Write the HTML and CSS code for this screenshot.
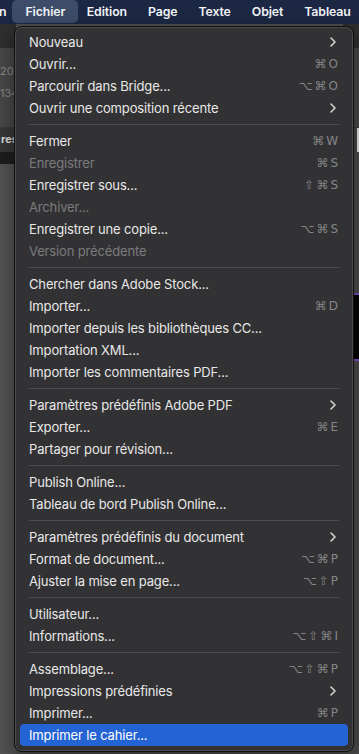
FILE: index.html
```html
<!DOCTYPE html>
<html lang="fr">
<head>
  <meta charset="UTF-8">
  <meta name="viewport" content="width=device-width, initial-scale=1.0">
  <title>Fichier</title>
  <link rel="stylesheet" href="styles.css">
</head>
<body>
  <!-- Menu bar -->
  <div class="menubar">
    <span class="menubar-item first">n</span>
    <span class="menubar-item active">Fichier</span>
    <span class="menubar-item">Edition</span>
    <span class="menubar-item">Page</span>
    <span class="menubar-item">Texte</span>
    <span class="menubar-item">Objet</span>
    <span class="menubar-item">Tableau</span>
  </div>

  <!-- App workspace behind the menu -->
  <div class="workspace">
    <div class="ws-left">
      <div class="ws-bar"></div>
      <div class="ws-fields">
        <span>200</span>
        <span>134</span>
      </div>
      <div class="ws-tab">res</div>
      <div class="ws-ruler"></div>
      <div class="ws-canvas"></div>
    </div>
    <div class="ws-right">
      <div class="ws-bar"></div>
      <div class="ws-fields"></div>
      <div class="ws-tab"></div>
      <div class="ws-canvas">
        <div class="ws-frame"></div>
      </div>
    </div>
  </div>

  <!-- Fichier dropdown -->
  <div class="menu">
    <div class="item">Nouveau<span class="sub"><svg width="6" height="10" viewBox="0 0 6 10"><path d="M1 1l4 4-4 4" /></svg></span></div>
    <div class="item">Ouvrir...<span class="key">⌘O</span></div>
    <div class="item">Parcourir dans Bridge...<span class="key">⌥⌘O</span></div>
    <div class="item">Ouvrir une composition récente<span class="sub"><svg width="6" height="10" viewBox="0 0 6 10"><path d="M1 1l4 4-4 4" /></svg></span></div>
    <div class="sep"></div>
    <div class="item">Fermer<span class="key">⌘W</span></div>
    <div class="item disabled">Enregistrer<span class="key">⌘S</span></div>
    <div class="item">Enregistrer sous...<span class="key">⇧⌘S</span></div>
    <div class="item disabled">Archiver...</div>
    <div class="item">Enregistrer une copie...<span class="key">⌥⌘S</span></div>
    <div class="item disabled">Version précédente</div>
    <div class="sep"></div>
    <div class="item">Chercher dans Adobe Stock...</div>
    <div class="item">Importer...<span class="key">⌘D</span></div>
    <div class="item">Importer depuis les bibliothèques CC...</div>
    <div class="item">Importation XML...</div>
    <div class="item">Importer les commentaires PDF...</div>
    <div class="sep"></div>
    <div class="item">Paramètres prédéfinis Adobe PDF<span class="sub"><svg width="6" height="10" viewBox="0 0 6 10"><path d="M1 1l4 4-4 4" /></svg></span></div>
    <div class="item">Exporter...<span class="key">⌘E</span></div>
    <div class="item">Partager pour révision...</div>
    <div class="sep"></div>
    <div class="item">Publish Online...</div>
    <div class="item">Tableau de bord Publish Online...</div>
    <div class="sep"></div>
    <div class="item">Paramètres prédéfinis du document<span class="sub"><svg width="6" height="10" viewBox="0 0 6 10"><path d="M1 1l4 4-4 4" /></svg></span></div>
    <div class="item">Format de document...<span class="key">⌥⌘P</span></div>
    <div class="item">Ajuster la mise en page...<span class="key">⌥⇧P</span></div>
    <div class="sep"></div>
    <div class="item">Utilisateur...</div>
    <div class="item">Informations...<span class="key">⌥⇧⌘I</span></div>
    <div class="sep"></div>
    <div class="item">Assemblage...<span class="key">⌥⇧⌘P</span></div>
    <div class="item">Impressions prédéfinies<span class="sub"><svg width="6" height="10" viewBox="0 0 6 10"><path d="M1 1l4 4-4 4" /></svg></span></div>
    <div class="item">Imprimer...<span class="key">⌘P</span></div>
    <div class="item selected">Imprimer le cahier...</div>
  </div>
</body>
</html>
```

FILE: styles.css
```css
* {
  margin: 0;
  padding: 0;
  box-sizing: border-box;
}

body {
  font-family: 'Inter', 'Noto Sans', sans-serif;
  background: #4f4f4f;
  color: #e6e6e6;
  height: 100vh;
  overflow: hidden;
  position: relative;
}

/* Top menu bar */
.menubar {
  height: 24px;
  background: #1c2843;
  display: flex;
  align-items: center;
  font-size: 12.3px;
  font-weight: 600;
  color: #f2f4f8;
  letter-spacing: -0.1px;
  white-space: nowrap;
  overflow: hidden;
}

.menubar-item {
  padding: 0 10.5px;
  line-height: 23px;
  align-self: flex-start;
}

.menubar-item.first {
  padding: 0 6px 0 0;
  margin-left: -1px;
}

.menubar-item.active {
  background: #3d4c69;
  border-radius: 5px;
  padding: 0 13px 0 13px;
  margin-right: -2px;
}

/* Workspace that peeks out around the menu */
.workspace {
  display: flex;
  justify-content: space-between;
  height: calc(100vh - 24px);
}

.ws-left,
.ws-right {
  width: 16px;
  display: flex;
  flex-direction: column;
}

.ws-bar {
  height: 24px;
  background: #2f2f2f;
}

.ws-fields {
  height: 80px;
  background: #484848;
  border-bottom: 1px solid #3a3a3a;
  display: flex;
  flex-direction: column;
  gap: 8px;
  padding-top: 16px;
  font-size: 11px;
  color: #8a8a8a;
}

.ws-tab {
  height: 24px;
  background: #383838;
  font-size: 11px;
  font-weight: 700;
  color: #dcdcdc;
  line-height: 22px;
  padding-left: 1px;
}

.ws-ruler {
  height: 12px;
  background: #1e1e1e;
}

.ws-canvas {
  flex: 1;
  background: #535353;
}

.ws-right .ws-tab {
  background: #4a4a4a;
  border-right: 2px solid #e8e8e8;
}

.ws-right .ws-canvas {
  padding-top: 141px;
  background: #4c4c4c;
}

.ws-frame {
  height: 68px;
  background: #050505;
  border-top: 2px solid #7b4fc6;
  border-bottom: 2px solid #7b4fc6;
}

/* Dropdown menu */
.menu {
  position: absolute;
  left: 14px;
  top: 26px;
  width: 340px;
  padding: 4px 5px 5px;
  background: #323234;
  border: 1px solid #101010;
  border-radius: 8px;
  box-shadow: inset 0 0 0 1px #4a4a4c, 0 6px 20px rgba(0, 0, 0, 0.45);
  font-size: 13px;
  letter-spacing: -0.15px;
}

.item {
  height: 22px;
  line-height: 22px;
  padding: 0 10px 0 9px;
  display: flex;
  justify-content: space-between;
  align-items: center;
  color: #e8e8e8;
  border-radius: 4px;
  white-space: nowrap;
}

.item.disabled {
  color: #7b7b7d;
}

.item.selected {
  background: #2463d3;
  color: #ffffff;
}

.key {
  font-family: 'DejaVu Sans', sans-serif;
  font-size: 12px;
  color: #858587;
  letter-spacing: 2px;
  margin-right: -2px;
}

.sub {
  display: flex;
  align-items: center;
  padding-right: 2px;
}

.sub svg path {
  fill: none;
  stroke: #d8d8d8;
  stroke-width: 1.5;
  stroke-linecap: round;
  stroke-linejoin: round;
}

.sep {
  height: 1px;
  margin: 5px 9px 5px 9px;
  background: #4c4c4e;
}
```
